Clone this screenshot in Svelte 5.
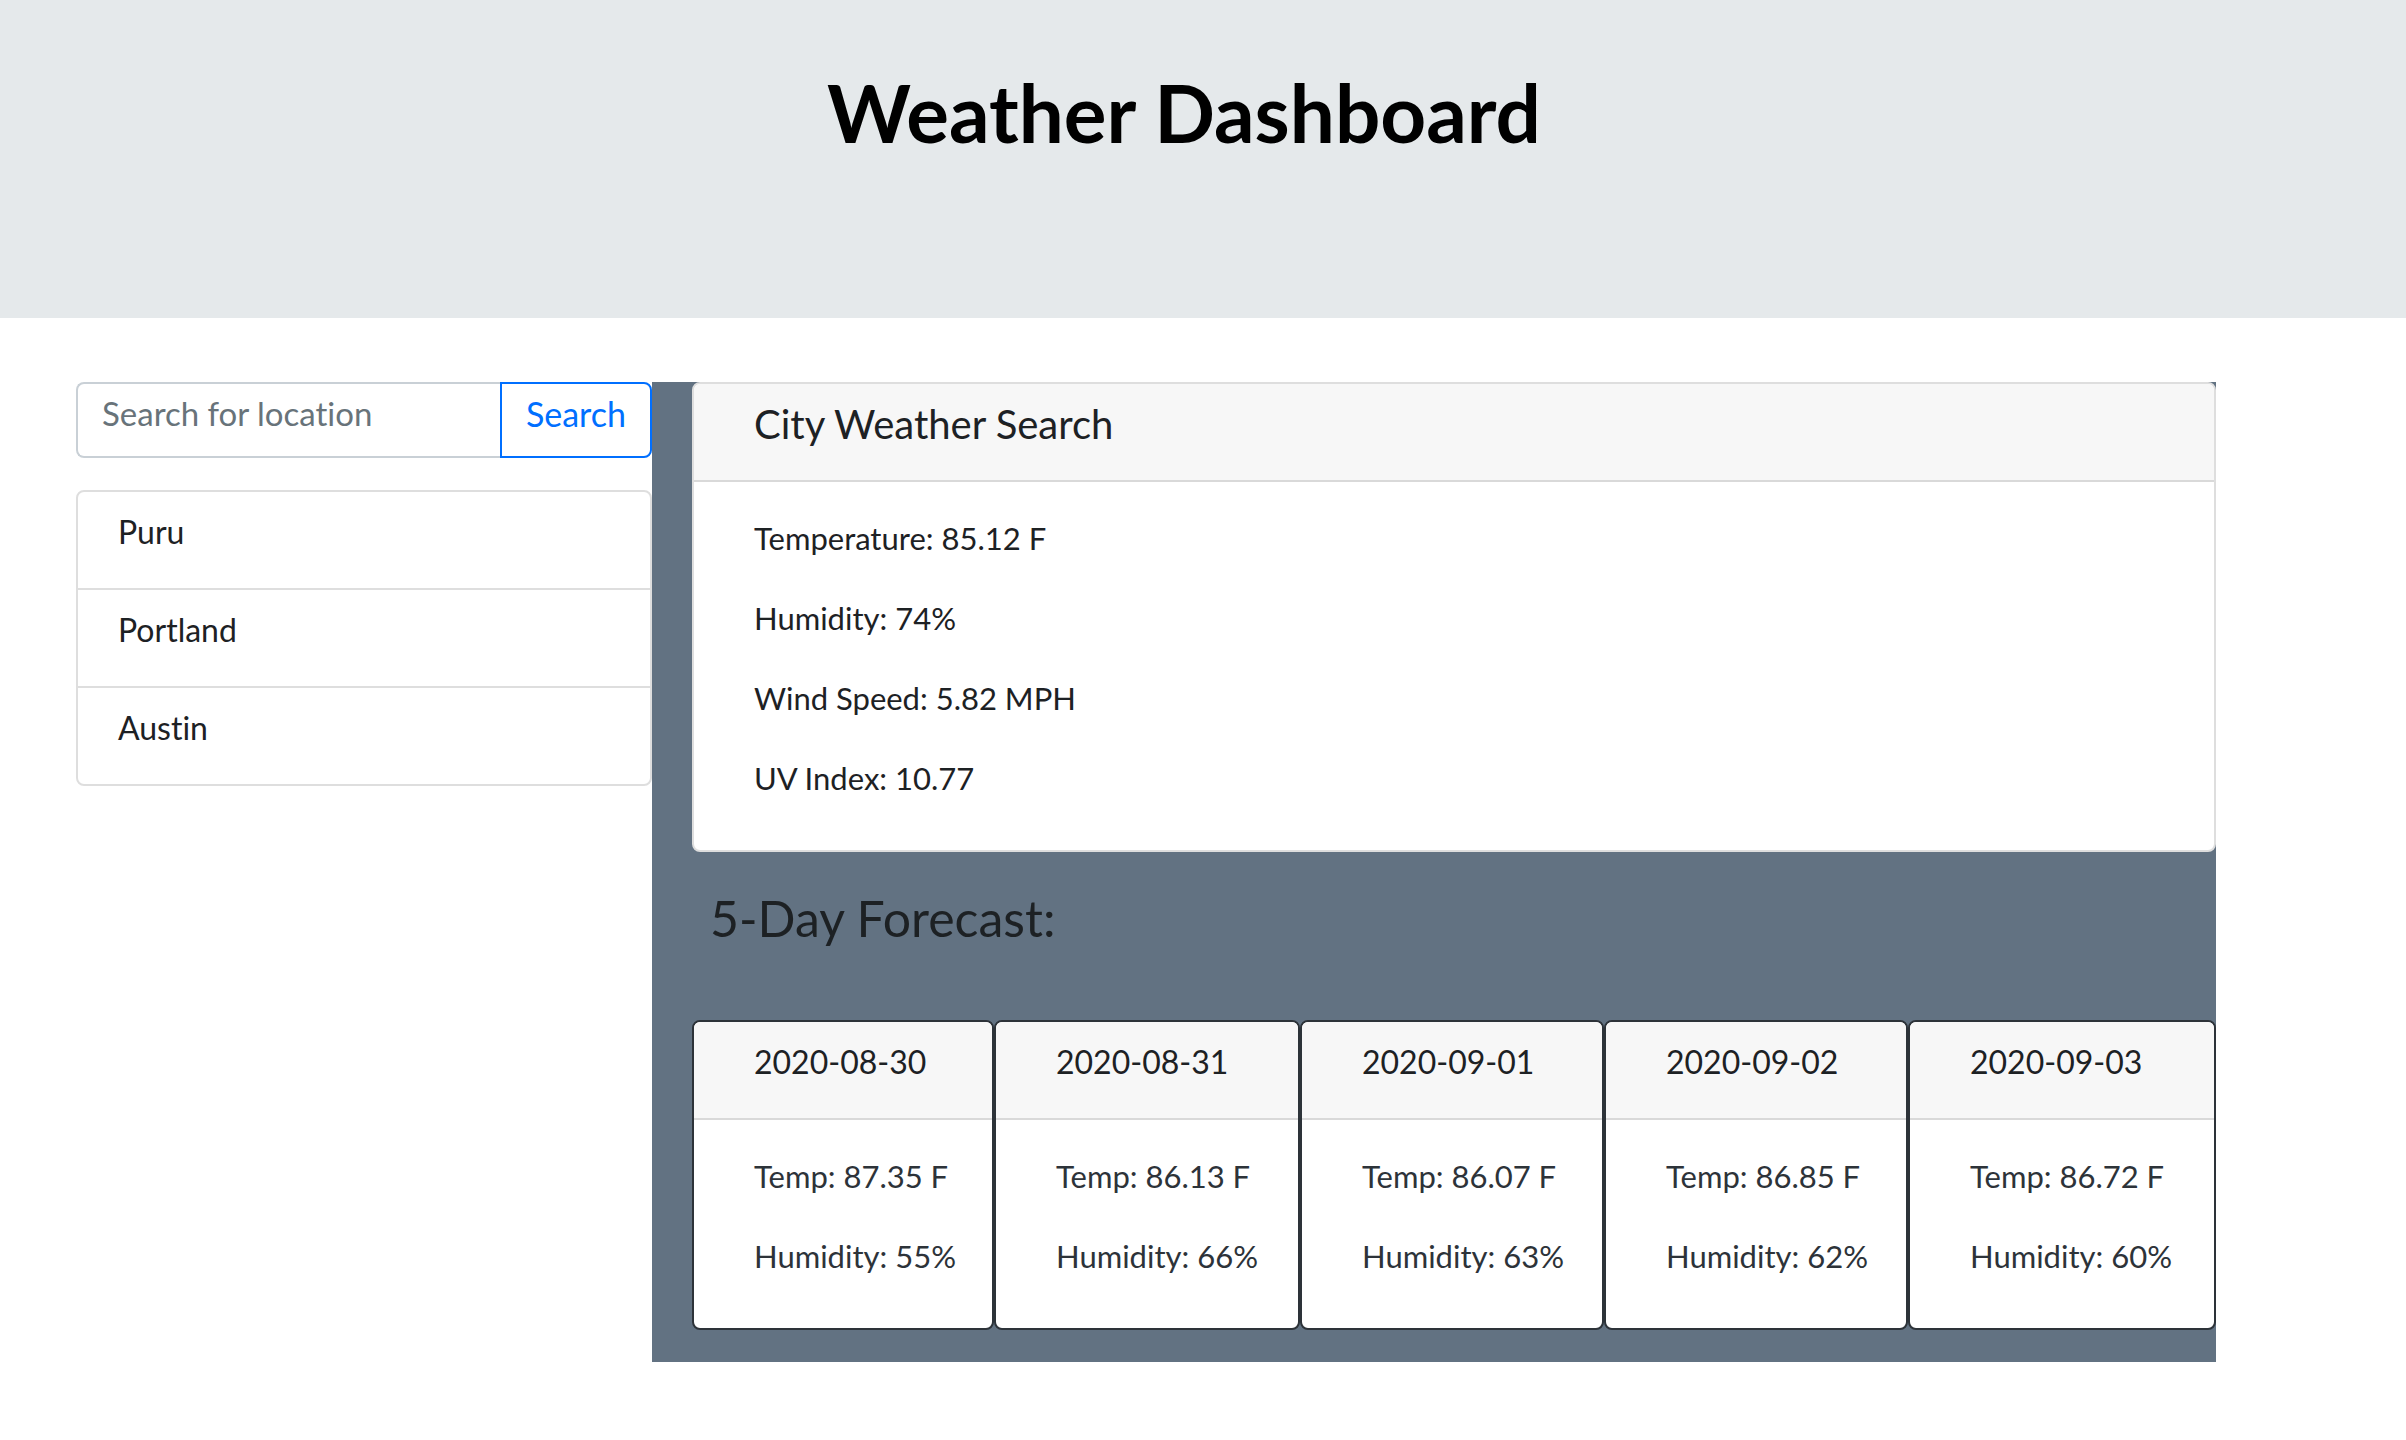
<script>
  const cities = ['Puru', 'Portland', 'Austin'];
  const current = [
    'Temperature: 85.12 F',
    'Humidity: 74%',
    'Wind Speed: 5.82 MPH',
    'UV Index: 10.77',
  ];
  const forecast = [
    { date: '2020-08-30', temp: '87.35', humidity: 55 },
    { date: '2020-08-31', temp: '86.13', humidity: 66 },
    { date: '2020-09-01', temp: '86.07', humidity: 63 },
    { date: '2020-09-02', temp: '86.85', humidity: 62 },
    { date: '2020-09-03', temp: '86.72', humidity: 60 },
  ];
  let query = $state('');
</script>

<header class="banner">
  <h1>Weather Dashboard</h1>
</header>

<main class="layout">
  <aside>
    <form class="search" onsubmit={(e) => e.preventDefault()}>
      <input type="text" placeholder="Search for location" aria-label="Search for location" bind:value={query} />
      <button type="submit">Search</button>
    </form>
    <ul class="cities">
      {#each cities as city}
        <li>{city}</li>
      {/each}
    </ul>
  </aside>

  <section class="panel">
    <article class="card">
      <h2 class="card-header title">City Weather Search</h2>
      <div class="card-body">
        {#each current as line}
          <p>{line}</p>
        {/each}
      </div>
    </article>

    <h2 class="forecast-title">5-Day Forecast:</h2>

    <div class="days">
      {#each forecast as day}
        <article class="card day">
          <h3 class="card-header">{day.date}</h3>
          <div class="card-body">
            <p>Temp: {day.temp} F</p>
            <p>Humidity: {day.humidity}%</p>
          </div>
        </article>
      {/each}
    </div>
  </section>
</main>

<style>
  :global(body) {
    margin: 0;
    background: #fff;
    color: #1d2124;
    font-family: Papyrus, Lato, sans-serif;
    font-size: 32px;
    font-variant-ligatures: none;
    line-height: 48px;
  }

  h1, h2, h3, p, ul {
    margin: 0;
    padding: 0;
    font-weight: 400;
  }

  .banner {
    padding: 64px 38px 158px 0;
    background: #e5e9eb;
    text-align: center;
  }

  h1 {
    color: #000;
    font-size: 80px;
    font-weight: 700;
    line-height: 96px;
  }

  .layout {
    display: grid;
    grid-template-columns: minmax(0, 576fr) minmax(0, 1564fr);
    align-items: start;
    padding: 64px 190px 64px 76px;
  }

  .search {
    display: flex;
    height: 76px;
    margin-bottom: 32px;
  }

  .search input,
  .search button {
    box-sizing: border-box;
    margin: 0;
    padding: 0 24px 14px;
    background: #fff;
    font-family: inherit;
    font-size: 34px;
    font-variant-ligatures: none;
    outline: none;
  }

  .search input {
    flex: 1;
    min-width: 0;
    border: 2px solid #c9d0d6;
    border-right: 0;
    border-radius: 8px 0 0 8px;
    color: #495057;
    font-size: 33px;
  }

  .search input::placeholder {
    color: #68737a;
    opacity: 1;
  }

  .search button {
    border: 2px solid #006fff;
    border-radius: 0 8px 8px 0;
    color: #006fff;
    cursor: pointer;
  }

  .cities {
    border: 2px solid #dedede;
    border-radius: 8px;
    list-style: none;
  }

  .cities li {
    padding: 16px 40px 32px;
  }

  .cities li + li {
    border-top: 2px solid #dedede;
  }

  .panel {
    padding: 0 0 32px 40px;
    background: #627282;
  }

  .card {
    overflow: hidden;
    border: 2px solid #dedede;
    border-radius: 8px;
    background: #fff;
  }

  .card-header {
    padding: 16px 60px 32px;
    border-bottom: 2px solid #d9d9d9;
    background: #f7f7f7;
    font-size: 32px;
    white-space: nowrap;
  }

  .title {
    font-size: 40px;
  }

  .card-body {
    padding: 32px 0 16px 60px;
    font-size: 31px;
    white-space: nowrap;
  }

  .card-body p {
    margin-bottom: 32px;
  }

  .forecast-title {
    margin: 36px 0 72px;
    padding-left: 18px;
    font-size: 50px;
    line-height: 60px;
  }

  .days {
    display: grid;
    grid-template-columns:
      minmax(0, 302fr) minmax(0, 306fr) minmax(0, 304fr) minmax(0, 304fr) minmax(0, 308fr);
  }

  .day {
    border-color: #2d3339;
  }

  .day .card-body {
    color: #2d3339;
  }
</style>
